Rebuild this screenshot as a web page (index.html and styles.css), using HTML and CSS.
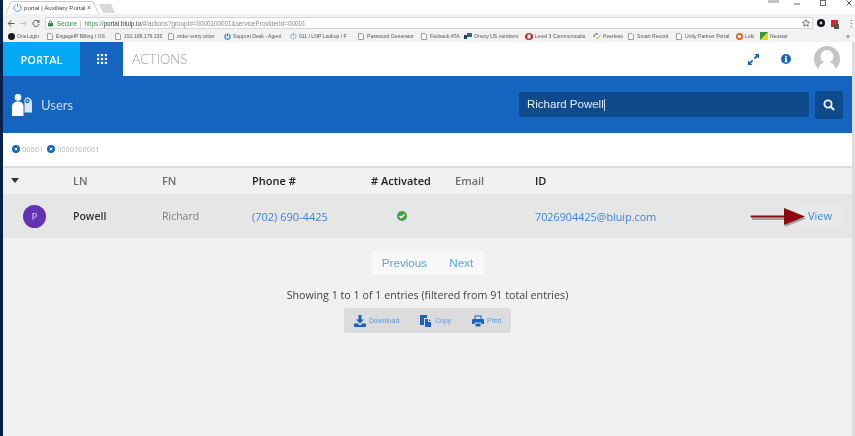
FILE: index.html
```html
<!DOCTYPE html>
<html lang="en">
<head>
<meta charset="utf-8">
<title>portal | Auxiliary Portal</title>
<link rel="stylesheet" href="styles.css">
</head>
<body>
<div class="screen">
  <div class="desktop-edge"></div>
  <div class="window">
    <div class="titlebar">
      <div class="tab">
        <svg class="tab-shape" width="94" height="13" viewBox="0 0 94 13"><path d="M0 13 L5 .5 H87 L93 13" fill="#fff" stroke="#bdbdbd" stroke-width=".8"/></svg>
        <svg class="tab-icon" width="9" height="9" viewBox="0 0 10 10"><path d="M3 1.800a4 4 0 1 0 4 0M5 .5v4" fill="none" stroke="#3f8fd8" stroke-width="1"/></svg>
        <span class="tab-title">portal | Auxiliary Portal</span>
        <span class="tab-close">×</span>
      </div>
      <svg class="tab-new" width="16" height="9" viewBox="0 0 16 9"><path d="M0 0H12L16 9H4Z" fill="#d9d9d9"/></svg>
      <div class="window-controls">
        <span class="user-chip"></span>
        <svg width="6" height="6" viewBox="0 0 6 6"><path d="M0 4H6" stroke="#666"/></svg>
        <svg width="6" height="6" viewBox="0 0 6 6"><rect x=".5" y=".5" width="5" height="5" fill="none" stroke="#666"/></svg>
        <svg width="6" height="6" viewBox="0 0 6 6"><path d="M.5.500l5 5M5.500.500l-5 5" stroke="#555"/></svg>
      </div>
    </div>
    <div class="toolbar">
      <svg width="9" height="9" viewBox="0 0 10 10"><path d="M9 5H2M5 1.500 1.500 5 5 8.500" fill="none" stroke="#555" stroke-width="1.200"/></svg>
      <svg width="9" height="9" viewBox="0 0 10 10"><path d="M1 5H8M5 1.500 8.500 5 5 8.500" fill="none" stroke="#c4c4c4" stroke-width="1.200"/></svg>
      <svg width="9" height="9" viewBox="0 0 10 10"><path d="M8.500 5.500A3.700 3.700 0 1 1 7.500 2.300M8.500.8v2.700H5.800" fill="none" stroke="#555" stroke-width="1.200"/></svg>
      <div class="omnibox">
        <svg class="lock" width="5" height="7" viewBox="0 0 6 7"><rect y="3" width="6" height="4" fill="#2e8b3d"/><path d="M1.500 3V1.800a1.500 1.500 0 0 1 3 0V3" fill="none" stroke="#2e8b3d"/></svg>
        <span class="secure">Secure</span>
        <span class="divider">|</span>
        <span class="url"><span class="https">https://</span><span class="domain">portal.bluip.io</span>/#/actions?groupId=0000100001&amp;serviceProviderId=00001</span>
        <svg class="star" width="8" height="8" viewBox="0 0 10 10"><path d="M5 .8 6.300 3.700 9.500 4 7 6.100 7.800 9.200 5 7.500 2.200 9.200 3 6.100.5 4 3.700 3.700Z" fill="none" stroke="#555"/></svg>
      </div>
      <svg class="ext" width="8" height="8" viewBox="0 0 8 8"><circle cx="4" cy="4" r="4" fill="#0b0b1e"/><circle cx="4" cy="4" r="1.400" fill="#ddd"/></svg>
      <div class="ext-red"><span class="ext-badge"></span></div>
      <span class="kebab">⋮</span>
    </div>
    <div class="bookmarks">
      <span class="bm"><svg width="7" height="7" viewBox="0 0 8 8"><circle cx="4" cy="4" r="4" fill="#1a1a1a"/></svg>OneLogin</span>
      <span class="bm"><svg class="page" width="6" height="7" viewBox="0 0 6 7"><path d="M.5.500H4L5.500 2V6.500H.5Z" fill="#fff" stroke="#777" stroke-width=".7"/></svg>EngageIP Billing / OS</span>
      <span class="bm"><svg class="page" width="6" height="7" viewBox="0 0 6 7"><path d="M.5.500H4L5.500 2V6.500H.5Z" fill="#fff" stroke="#777" stroke-width=".7"/></svg>192.168.176.135</span>
      <span class="bm"><svg class="page" width="6" height="7" viewBox="0 0 6 7"><path d="M.5.500H4L5.500 2V6.500H.5Z" fill="#fff" stroke="#777" stroke-width=".7"/></svg>order entry orion</span>
      <span class="bm"><svg width="7" height="7" viewBox="0 0 8 8"><path d="M2.500 1.500a3 3 0 1 0 3 0M4 .5v3.500" fill="none" stroke="#1a7fc9" stroke-width="1.300"/></svg>Support Desk - Agent</span>
      <span class="bm"><svg width="7" height="8" viewBox="0 0 8 8"><path d="M2.500 1.500a3 3 0 1 0 3 0M4 .5v3.500" fill="none" stroke="#3f8fd8" stroke-width=".8"/></svg>911 / LNP Lookup / F</span>
      <span class="bm"><svg class="page" width="6" height="7" viewBox="0 0 6 7"><path d="M.5.500H4L5.500 2V6.500H.5Z" fill="#fff" stroke="#777" stroke-width=".7"/></svg>Password Generator</span>
      <span class="bm"><svg class="page" width="6" height="7" viewBox="0 0 6 7"><path d="M.5.500H4L5.500 2V6.500H.5Z" fill="#fff" stroke="#777" stroke-width=".7"/></svg>Faxback ATA</span>
      <span class="bm"><svg width="8" height="6" viewBox="0 0 8 6"><rect y="2" width="3" height="4" fill="#1f3f70"/><rect x="3" width="5" height="4" fill="#345f95"/></svg>Onvoy US numbers</span>
      <span class="bm"><svg width="8" height="7" viewBox="0 0 8 7"><ellipse cx="4" cy="3.500" rx="4" ry="3.500" fill="#c02a2a"/><rect x="2.500" y="1.500" width="3" height="4" fill="#fff"/></svg>Level 3 Communicatio</span>
      <span class="bm"><svg width="8" height="8" viewBox="0 0 8 8"><path d="M1 5a3 3 0 0 1 4-3" fill="none" stroke="#344" stroke-width="1"/><path d="M7 3a3 3 0 0 1-4 3" fill="none" stroke="#c9a227" stroke-width="1"/></svg>Peerless</span>
      <span class="bm"><svg class="page" width="6" height="7" viewBox="0 0 6 7"><path d="M.5.500H4L5.500 2V6.500H.5Z" fill="#fff" stroke="#777" stroke-width=".7"/></svg>Smart Record</span>
      <span class="bm"><svg class="page" width="6" height="7" viewBox="0 0 6 7"><path d="M.5.500H4L5.500 2V6.500H.5Z" fill="#fff" stroke="#777" stroke-width=".7"/></svg>Unity Partner Portal</span>
      <span class="bm"><svg width="7" height="7" viewBox="0 0 8 8"><circle cx="4" cy="4" r="3" fill="#fff" stroke="#e0601c" stroke-width="2"/></svg>Loki</span>
      <span class="bm"><svg width="8" height="8" viewBox="0 0 8 8"><rect width="8" height="8" fill="#2f9a3a"/><path d="M0 8 8 0V8Z" fill="#e4d42a"/></svg>Neustar</span>
      <span class="bm-more">»</span>
    </div>

    <div class="app">
      <header class="appbar">
        <div class="brand">PORTAL</div>
        <div class="apps">
          <svg width="10" height="10" viewBox="0 0 10 10" fill="#fff"><rect width="2.200" height="2.200"/><rect x="3.900" width="2.200" height="2.200"/><rect x="7.800" width="2.200" height="2.200"/><rect y="3.900" width="2.200" height="2.200"/><rect x="3.900" y="3.900" width="2.200" height="2.200"/><rect x="7.800" y="3.900" width="2.200" height="2.200"/><rect y="7.800" width="2.200" height="2.200"/><rect x="3.900" y="7.800" width="2.200" height="2.200"/><rect x="7.800" y="7.800" width="2.200" height="2.200"/></svg>
        </div>
        <div class="app-title">ACTIONS</div>
        <div class="app-actions">
          <svg class="expand" width="11" height="11" viewBox="0 0 11 11" fill="#1565c0"><path d="M6.500 0H11V4.500L9.400 2.900 7 5.300 5.700 4 8.100 1.600Z"/><path d="M4.500 11H0V6.500L1.600 8.100 4 5.700 5.300 7 2.900 9.400Z"/></svg>
          <svg class="info" width="10" height="10" viewBox="0 0 10 10"><circle cx="5" cy="5" r="5" fill="#1565c0"/><rect x="4.100" y="1.800" width="1.800" height="1.500" fill="#fff"/><path d="M3.700 4.100H5.900V7.300H6.500V8.200H3.600V7.300H4.200V5H3.700Z" fill="#fff"/></svg>
          <svg class="avatar" width="26" height="26" viewBox="0 0 26 26"><circle cx="13" cy="13" r="13" fill="#c4c4c4"/><circle cx="13" cy="10.500" r="6.500" fill="#fff"/><path d="M4.500 23c1-5 4-7 8.500-7s7.500 2 8.500 7a13 13 0 0 1-17 0Z" fill="#fff"/></svg>
        </div>
      </header>

      <section class="banner">
        <svg class="users-icon" width="20" height="22" viewBox="0 0 20 22"><circle cx="6" cy="3.400" r="3.300" fill="#fff"/><path d="M0 22V12.500C0 9.500 2.500 7.500 6 7.500 9 7.500 11.500 9 11.500 12.500V22Z" fill="#fff"/><path d="M12.500 18.500V8.500C12 6 13 3.500 15.500 3.500S20 6 20 8.500V18.500Z" fill="#dbe7f5"/><circle cx="15.500" cy="7" r="2.200" fill="#1565c0"/><circle cx="15.500" cy="7" r="1" fill="#dbe7f5"/></svg>
        <div class="banner-title">Users</div>
        <div class="search">
          <div class="search-input">Richard Powell<span class="caret-bar"></span></div>
          <div class="search-btn">
            <svg width="12" height="12" viewBox="0 0 12 12"><circle cx="5" cy="5" r="3.600" fill="none" stroke="#fff" stroke-width="1.800"/><path d="M7.800 7.800 11 11" stroke="#fff" stroke-width="2.200"/></svg>
          </div>
        </div>
      </section>

      <div class="crumbs">
        <span class="crumb"><svg width="8" height="8" viewBox="0 0 8 8"><circle cx="4" cy="4" r="4" fill="#1565c0"/><path d="M2.600 2.600l2.800 2.800M5.400 2.600 2.600 5.400" stroke="#fff" stroke-width="1"/></svg>00001</span>
        <span class="crumb"><svg width="8" height="8" viewBox="0 0 8 8"><circle cx="4" cy="4" r="4" fill="#1565c0"/><path d="M2.600 2.600l2.800 2.800M5.400 2.600 2.600 5.400" stroke="#fff" stroke-width="1"/></svg>0000100001</span>
      </div>

      <div class="table">
        <div class="thead grid-row">
          <span class="sort"></span>
          <span class="th-muted">LN</span>
          <span class="th-muted">FN</span>
          <span class="th-strong">Phone #</span>
          <span class="th-strong">&#35; Activated</span>
          <span class="th-muted">Email</span>
          <span class="th-strong">ID</span>
          <span></span>
        </div>
        <div class="tbody grid-row">
          <span class="badge">P</span>
          <span class="last">Powell</span>
          <span class="first">Richard</span>
          <span class="link">(702) 690-4425</span>
          <span class="check"><svg width="10" height="10" viewBox="0 0 10 10"><circle cx="5" cy="5" r="5" fill="#43a047"/><path d="M2.600 5.100 4.300 6.800 7.500 3.500" fill="none" stroke="#fff" stroke-width="1.500"/></svg></span>
          <span></span>
          <span class="link email">7026904425@bluip.com</span>
          <span class="view">View</span>
          <svg class="arrow" width="60" height="24" viewBox="0 0 60 24"><path d="M1 10.500H34V3L55 11.500 34 20V13H1Z" fill="#000" opacity=".3" transform="translate(1 2)"/><path d="M1 10.500Q0 11.500 1 12.500H34V20L55 11.500 34 3V10.500Z" fill="#8b0a10"/></svg>
        </div>
      </div>

      <div class="footer-area">
        <div class="pager"><span>Previous</span><span>Next</span></div>
        <div class="summary">Showing 1 to 1 of 1 entries (filtered from 91 total entries)</div>
        <div class="export">
          <span class="export-item"><svg width="12" height="12" viewBox="0 0 12 12" fill="#1565c0"><path d="M4.500 0H7.500V4.500H10L6 8.500 2 4.500H4.500Z"/><path d="M0 8.500H3.500L6 10.500 8.500 8.500H12V12H0Z"/></svg>Download</span>
          <span class="export-item"><svg width="12" height="12" viewBox="0 0 12 12" fill="#1565c0"><path d="M0 0H7V3H4V10H0Z"/><path d="M5 4H8V7H11V12H5Z"/><path d="M9 4 11 6H9Z"/></svg>Copy</span>
          <span class="export-item"><svg width="12" height="12" viewBox="0 0 12 12" fill="#1565c0"><path d="M2.500 4V.5H9.500V4H8.500V1.500H3.500V4Z"/><path d="M0 5a1 1 0 0 1 1-1H11a1 1 0 0 1 1 1V9H9.500V7.500H2.500V9H0Z"/><path d="M3.500 8.500H8.500V11.500H3.500Z"/></svg>Print</span>
        </div>
      </div>
    </div>
  </div>
</div>
</body>
</html>
```

FILE: styles.css
```css
* { box-sizing: border-box; }
html, body { margin: 0; padding: 0; }
body { width: 855px; height: 436px; overflow: hidden; background: #f1f1f1; font-family: "Open Sans", sans-serif; }
.screen { display: flex; width: 855px; height: 436px; filter: blur(.35px); }
.desktop-edge { width: 3px; background: #05224a; flex: none; }
.window { flex: 1; min-width: 0; display: flex; flex-direction: column; height: 436px; }

/* browser chrome */
.titlebar { height: 14px; background: #fff; display: flex; align-items: flex-end; padding-left: 3px; }
.tab { position: relative; width: 92px; height: 13px; display: flex; align-items: center; padding-left: 7px; flex: none; }
.tab-shape { position: absolute; left: 0; top: 0; }
.tab-icon, .tab-title, .tab-close { position: relative; flex: none; }
.tab-title { font: 6.200px "Liberation Sans", sans-serif; color: #444; margin-left: 2px; white-space: nowrap; width: 63px; }
.tab-close { font: 7px "Liberation Sans", sans-serif; color: #555; }
.tab-new { margin: 0 0 1px 1px; flex: none; }
.window-controls { margin-left: auto; height: 14px; display: flex; align-items: flex-start; gap: 20px; padding-right: 3px; }
.user-chip { width: 11px; height: 3px; background: #c4c4c4; margin-right: -5px; }

.toolbar { height: 16px; padding-top: 2px; background: #f2f2f2; display: flex; align-items: center; padding-left: 4px; gap: 4px; }
.omnibox { width: 768px; height: 12px; flex: none; background: #fff; border: 1px solid #d6d6d6; margin-left: 1px; display: flex; align-items: center; padding-left: 2px; font: 6.300px "Liberation Sans", sans-serif; color: #888; }
.lock { flex: none; }
.secure { color: #2e8b3d; margin-left: 4px; }
.divider { margin: 0 3px; color: #aaa; }
.url { white-space: nowrap; }
.https { color: #3a9a4a; }
.domain { color: #333; }
.star { margin-left: auto; margin-right: 2px; flex: none; }
.ext { flex: none; }
.ext-red { position: relative; width: 7px; height: 7px; background: #d62a2a; margin-left: 2px; flex: none; }
.ext-badge { position: absolute; left: 3px; top: 4px; width: 5px; height: 5px; background: #555; }
.kebab { font: 8px "DejaVu Sans", sans-serif; color: #444; margin-left: 5px; }

.bookmarks { height: 12px; background: #f2f2f2; display: grid; grid-template-columns: 39px 68px 53px 56px 66px 68px 63px 43px 61px 68px 35px 48px 60px 24px 86px 1fr; align-items: center; padding-left: 5px; font: 5.100px "Liberation Sans", sans-serif; color: #555; }
.bm { display: flex; align-items: center; gap: 2px; white-space: nowrap; }
.bm svg { flex: none; }
.bm .page { margin-right: 1px; }
.bm-more { font-size: 7px; }

/* app */
.app { flex: 1; display: flex; flex-direction: column; border-right: 3px solid #dcdcdc; background: #f1f1f1; min-height: 0; }
.appbar { height: 34px; background: #fff; display: flex; align-items: stretch; flex: none; }
.brand { width: 77px; background: #03a9f4; color: #fff; font: 600 11px "Open Sans", sans-serif; display: flex; align-items: center; justify-content: center; }
.apps { width: 43px; background: #1565c0; display: flex; align-items: center; justify-content: center; }
.app-title { margin-left: 9px; color: #9c9c9c; font: 300 13px "Lato", sans-serif; display: flex; align-items: center; }
.app-actions { margin-left: auto; display: flex; align-items: center; padding-right: 12px; }
.expand { margin-right: 22px; }
.info { margin-right: 23px; }
.avatar { flex: none; }

.banner { height: 57px; background: #1565c0; display: flex; align-items: center; padding-left: 9px; flex: none; }
.users-icon { flex: none; }
.banner-title { margin-left: 9px; color: #c7d9f0; font: 13px "Lato", sans-serif; }
.search { margin-left: auto; display: flex; align-items: center; gap: 6px; padding-right: 9px; }
.search-input { width: 290px; height: 25px; background: #0f4a8c; border-radius: 2px; color: #e9eef5; font: 11.500px/25px "Liberation Sans", sans-serif; padding-left: 8px; display: flex; align-items: center; }
.caret-bar { width: 1px; height: 12px; background: #c7d4e4; }
.search-btn { width: 28px; height: 28px; background: #0f4a8c; border-radius: 2px; display: flex; align-items: center; justify-content: center; }

.crumbs { height: 33px; padding-bottom: 2px; background: #fff; display: flex; align-items: center; padding-left: 9px; gap: 4px; flex: none; }
.crumb { display: flex; align-items: center; gap: 2px; color: #b5b5b5; font: 7.400px "Open Sans", sans-serif; }

.grid-row { display: grid; grid-template-columns: 70px 89px 90px 119px 84px 80px 214px 1fr; align-items: center; }
.thead { height: 28px; padding-bottom: 2px; background: #f1f1f1; border-top: 2px solid #dcdcdc; font-size: 11px; }
.thead > span { font-family: "Open Sans", sans-serif; }
.th-muted { color: #6e6e6e; font-weight: 600; }
.th-strong { color: #222; font-weight: 600; }
.sort { width: 0; height: 0; margin-left: 8px; border: 4px solid transparent; border-top: 5px solid #333; border-bottom: 0; }
.tbody { position: relative; height: 44px; background: #e6e6e6; font-size: 11px; font-family: "Open Sans", sans-serif; }
.badge { width: 23px; height: 23px; margin-left: 20px; border-radius: 50%; background: #6233b4; color: #e6e0f3; font-size: 9px; display: flex; align-items: center; justify-content: center; }
.last { color: #333; font-weight: 600; font-size: 10.500px; }
.first { color: #808080; font-size: 10.500px; }
.link { color: #3b86d8; }
.email { font-size: 10.800px; }
.check { display: flex; padding-left: 26px; }
.view { width: 46px; height: 24px; background: #e9e9e9; border-radius: 2px; color: #3b86d8; font-size: 11px; justify-self: end; margin-right: 9px; margin-top: -1px; display: flex; align-items: center; justify-content: center; }
.arrow { position: absolute; left: 747px; top: 11px; }

.footer-area { flex: 1; display: flex; flex-direction: column; align-items: center; padding-top: 12px; background: #f1f1f1; }
.pager { width: 112px; height: 25px; background: #f8f8f8; border-radius: 3px; display: flex; align-items: center; justify-content: center; gap: 22px; color: #5fa3e6; font: 11.700px "Liberation Sans", sans-serif; }
.summary { margin-top: 13px; color: #444; font: 10.700px "Open Sans", sans-serif; white-space: nowrap; }
.export { margin-top: 6px; width: 167px; height: 25px; background: #dcdcdc; border-radius: 3px; display: flex; align-items: center; justify-content: center; gap: 21px; color: #5b96dc; font: 6.800px "Liberation Sans", sans-serif; }
.export-item { display: flex; align-items: center; gap: 3px; }
```
